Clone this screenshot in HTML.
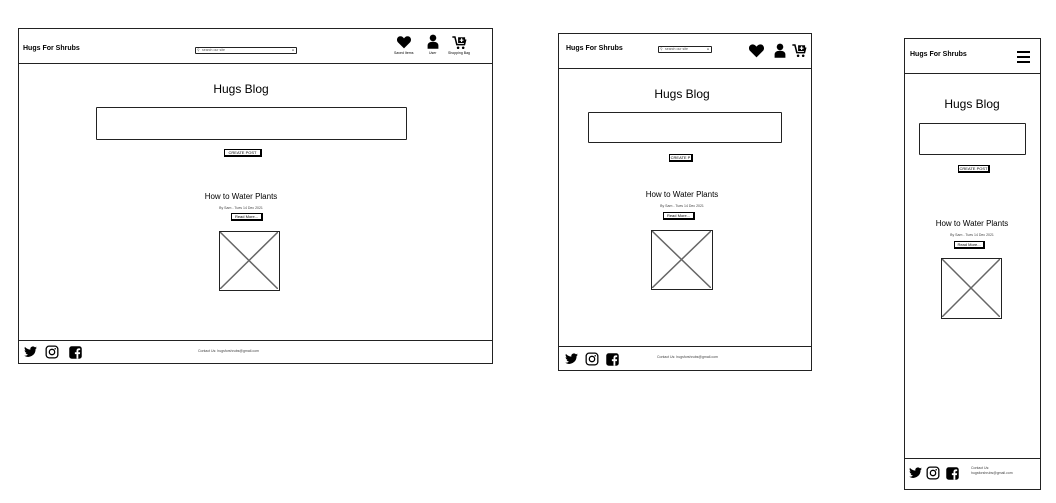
<!DOCTYPE html>
<html><head><meta charset="utf-8"><style>
body{margin:0;width:1056px;height:503px;background:#fff;position:relative;overflow:hidden;font-family:"Liberation Sans",sans-serif;color:#000}
.a{position:absolute;box-sizing:border-box}
.fr{border:1.5px solid #222}
.ln{height:0;border-top:1.5px solid #222}
.t{white-space:nowrap}
.box{border:1.5px solid #222;border-radius:1px}
.btn{border:1px solid #000;border-right:2px solid #000;border-bottom:2px solid #000;font-size:4px;text-align:center;line-height:5px}
.img{border:1.5px solid #222}
.img svg{position:absolute;left:0;top:0}
.s{font-size:3.5px;color:#444}
</style></head><body>
<svg width="0" height="0" style="position:absolute">
<defs>
<symbol id="tw" viewBox="0 0 24 24"><path d="M23 4.6c-.8.4-1.7.6-2.6.7.9-.6 1.6-1.4 2-2.5-.9.5-1.9.9-2.9 1.1a4.5 4.5 0 0 0-7.7 4.1C8 7.8 4.7 6 2.5 3.3c-1.2 2-.6 4.6 1.4 6-.7 0-1.4-.2-2-.6 0 2.2 1.5 4.1 3.6 4.5-.7.2-1.4.2-2 .1.6 1.8 2.3 3.1 4.2 3.1A9 9 0 0 1 1 18.3 12.8 12.8 0 0 0 20.7 7c.9-.6 1.7-1.4 2.3-2.4z" fill="#000"/></symbol>
<symbol id="ig" viewBox="0 0 24 24"><rect x="2" y="2" width="20" height="20" rx="5" fill="none" stroke="#000" stroke-width="2.2"/><circle cx="12" cy="12" r="4.6" fill="none" stroke="#000" stroke-width="2.2"/><circle cx="17.5" cy="6.5" r="1.3" fill="#000"/></symbol>
<symbol id="fb" viewBox="0 0 24 24"><rect x="2" y="2" width="20" height="20" rx="4" fill="#000"/><path d="M16.5 22v-7.5h2.5l.4-3h-2.9V9.7c0-.9.3-1.5 1.5-1.5h1.5V5.5c-.3 0-1.2-.1-2.2-.1-2.2 0-3.7 1.3-3.7 3.8v2.3H11v3h2.6V22z" fill="#fff"/></symbol>
<symbol id="ht" viewBox="0 0 24 22"><path d="M12 21 2.5 11.5C-.5 8.5 1 2 6.5 2c2.5 0 4.2 1.6 5.5 3.4C13.3 3.6 15 2 17.5 2 23 2 24.5 8.5 21.5 11.5z" fill="#000"/></symbol>
<symbol id="us" viewBox="0 0 20 24"><circle cx="10" cy="6" r="5.5" fill="#000"/><path d="M1 24v-5c0-4 3-6.5 9-6.5s9 2.5 9 6.5v5z" fill="#000"/></symbol>
<symbol id="ct" viewBox="0 0 24 22"><path d="M0 1.5h4l3 12h12l2-8" fill="none" stroke="#000" stroke-width="2.4"/><rect x="9" y="2" width="11" height="9" fill="#000"/><path d="M14.5 3.5v6M11.5 6.5h6" stroke="#fff" stroke-width="1.8"/><circle cx="9" cy="18.5" r="2" fill="#000"/><circle cx="17" cy="18.5" r="2" fill="#000"/></symbol>
<symbol id="x" viewBox="0 0 100 100" preserveAspectRatio="none"><path d="M0 0 100 100M100 0 0 100" stroke="#666" stroke-width="1.5" vector-effect="non-scaling-stroke"/></symbol>
</defs></svg>

<!-- Frame 1 -->
<div class="a fr" style="left:18px;top:28px;width:475px;height:336px"></div>
<div class="a ln" style="left:18px;top:63px;width:475px"></div>
<div class="a ln" style="left:18px;top:340px;width:475px"></div>
<div class="a t" style="left:23px;top:45px;font-size:7px;font-weight:bold">Hugs For Shrubs</div>
<div class="a box" style="left:195px;top:47px;width:102px;height:7px;border-width:1px;font-size:3.5px;line-height:5px;padding-left:6px;color:#555">search our site<span style="position:absolute;left:1px;top:0">&#9906;</span><span style="position:absolute;right:2px;top:0">&#9679;</span></div>
<svg class="a" style="left:396px;top:35px" width="16" height="14"><use href="#ht"/></svg>
<svg class="a" style="left:427px;top:34px" width="12" height="15"><use href="#us"/></svg>
<svg class="a" style="left:452px;top:36px" width="16" height="14"><use href="#ct"/></svg>
<div class="a t s" style="left:394px;top:51px;color:#000">Saved Items</div>
<div class="a t s" style="left:429px;top:51px;color:#000">User</div>
<div class="a t s" style="left:448px;top:51px;color:#000">Shopping Bag</div>
<div class="a t" style="left:191px;top:82px;width:100px;text-align:center;font-size:12px">Hugs Blog</div>
<div class="a box" style="left:96px;top:107px;width:311px;height:33px"></div>
<div class="a btn" style="left:224px;top:149px;width:38px;height:8px">CREATE POST</div>
<div class="a t" style="left:191px;top:192px;width:100px;text-align:center;font-size:8px">How to Water Plants</div>
<div class="a t s" style="left:191px;top:206px;width:100px;text-align:center">By Sam - Tues 14 Dec 2021</div>
<div class="a btn" style="left:231px;top:213px;width:32px;height:8px">Read More...</div>
<div class="a img" style="left:219px;top:231px;width:61px;height:60px"><svg width="58" height="57"><use href="#x"/></svg></div>
<svg class="a" style="left:23px;top:345px" width="15" height="14"><use href="#tw"/></svg>
<svg class="a" style="left:45px;top:345px" width="14" height="14"><use href="#ig"/></svg>
<svg class="a" style="left:68px;top:345px" width="15" height="15"><use href="#fb"/></svg>
<div class="a t s" style="left:198px;top:349px">Contact Us: hugsforshrubs@gmail.com</div>

<!-- Frame 2 -->
<div class="a fr" style="left:558px;top:33px;width:254px;height:338px"></div>
<div class="a ln" style="left:558px;top:68px;width:254px"></div>
<div class="a ln" style="left:558px;top:346px;width:254px"></div>
<div class="a t" style="left:566px;top:45px;font-size:7px;font-weight:bold">Hugs For Shrubs</div>
<div class="a box" style="left:658px;top:46px;width:54px;height:7px;border-width:1px;font-size:3.5px;line-height:5px;padding-left:6px;color:#555">search our site<span style="position:absolute;left:1px;top:0">&#9906;</span><span style="position:absolute;right:2px;top:0">&#9679;</span></div>
<svg class="a" style="left:748px;top:43px" width="17" height="15"><use href="#ht"/></svg>
<svg class="a" style="left:774px;top:43px" width="12" height="15"><use href="#us"/></svg>
<svg class="a" style="left:792px;top:44px" width="16" height="14"><use href="#ct"/></svg>
<div class="a t" style="left:632px;top:87px;width:100px;text-align:center;font-size:12px">Hugs Blog</div>
<div class="a box" style="left:588px;top:112px;width:194px;height:31px"></div>
<div class="a btn" style="left:669px;top:154px;width:24px;height:8px;overflow:hidden">CREATE P</div>
<div class="a t" style="left:630px;top:190px;width:104px;text-align:center;font-size:8px">How to Water Plants</div>
<div class="a t s" style="left:632px;top:204px;width:100px;text-align:center">By Sam - Tues 14 Dec 2021</div>
<div class="a btn" style="left:663px;top:212px;width:32px;height:8px">Read More...</div>
<div class="a img" style="left:651px;top:230px;width:62px;height:60px"><svg width="59" height="57"><use href="#x"/></svg></div>
<svg class="a" style="left:564px;top:352px" width="15" height="14"><use href="#tw"/></svg>
<svg class="a" style="left:585px;top:352px" width="14" height="14"><use href="#ig"/></svg>
<svg class="a" style="left:605px;top:352px" width="15" height="15"><use href="#fb"/></svg>
<div class="a t s" style="left:657px;top:355px">Contact Us: hugsforshrubs@gmail.com</div>

<!-- Frame 3 -->
<div class="a fr" style="left:904px;top:38px;width:137px;height:452px"></div>
<div class="a ln" style="left:904px;top:73px;width:137px"></div>
<div class="a ln" style="left:904px;top:458px;width:137px"></div>
<div class="a t" style="left:910px;top:51px;font-size:7px;font-weight:bold">Hugs For Shrubs</div>
<div class="a" style="left:1017px;top:51px;width:13px;height:2px;background:#000"></div>
<div class="a" style="left:1017px;top:56px;width:13px;height:2px;background:#000"></div>
<div class="a" style="left:1017px;top:61px;width:13px;height:2px;background:#000"></div>
<div class="a t" style="left:922px;top:97px;width:100px;text-align:center;font-size:12px">Hugs Blog</div>
<div class="a box" style="left:919px;top:123px;width:107px;height:32px"></div>
<div class="a btn" style="left:958px;top:165px;width:32px;height:8px">CREATE POST</div>
<div class="a t" style="left:920px;top:219px;width:104px;text-align:center;font-size:8px">How to Water Plants</div>
<div class="a t s" style="left:922px;top:233px;width:100px;text-align:center">By Sam - Tues 14 Dec 2021</div>
<div class="a btn" style="left:954px;top:241px;width:31px;height:8px">Read More...</div>
<div class="a img" style="left:941px;top:258px;width:61px;height:61px"><svg width="58" height="58"><use href="#x"/></svg></div>
<svg class="a" style="left:908px;top:466px" width="15" height="14"><use href="#tw"/></svg>
<svg class="a" style="left:926px;top:466px" width="14" height="14"><use href="#ig"/></svg>
<svg class="a" style="left:945px;top:466px" width="15" height="15"><use href="#fb"/></svg>
<div class="a t s" style="left:971px;top:466px;line-height:5px">Contact Us:<br>hugsforshrubs@gmail.com</div>
</body></html>
